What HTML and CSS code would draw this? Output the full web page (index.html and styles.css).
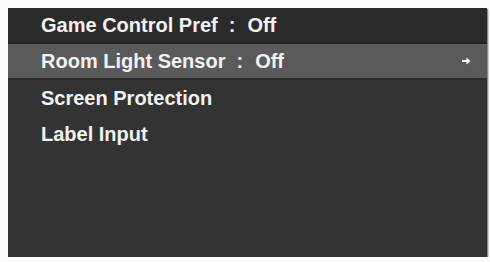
FILE: index.html
```html
<!DOCTYPE html>
<html>
<head>
<meta charset="utf-8">
<link rel="stylesheet" href="styles.css">
</head>
<body>
<div class="panel">
  <div class="row header"><span class="label">Game Control Pref</span><span class="colon">:</span><span class="value">Off</span></div>
  <div class="row selected"><span class="label">Room Light Sensor</span><span class="colon">:</span><span class="value">Off</span>
    <svg class="arrow" width="9" height="8" viewBox="0 0 9 8"><path d="M0 3h4.5V0.5L8.5 4 4.5 7.5V5H0z" fill="#fff"/></svg>
  </div>
  <div class="row"><span class="label">Screen Protection</span></div>
  <div class="row"><span class="label">Label Input</span></div>
</div>
</body>
</html>
```
FILE: styles.css
```css
html, body {
  margin: 0;
  padding: 0;
  background: #fbfbfb;
}
body {
  padding: 8px 0 0 8px;
}
.panel {
  width: 479px;
  height: 249px;
  background: #333333;
  box-shadow: 1px 1px 0 #8a8a8a, 2px 2px 0 #d0d0d0;
  font-family: "Liberation Sans", Arial, sans-serif;
  font-weight: bold;
  font-size: 20px;
  color: #f2f2f2;
  display: flex;
  flex-direction: column;
}
.row {
  height: 36px;
  line-height: 34px;
  padding-left: 33px;
  padding-right: 16px;
  display: flex;
  align-items: center;
  box-sizing: border-box;
  white-space: pre;
}
.header {
  background: #2b2b2b;
  border-bottom: 2px solid #232323;
  line-height: 32px;
}
.selected {
  background: #5a5a5a;
  border-bottom: 2px solid #2a2a2a;
}
.colon {
  margin: 0 12px 0 11px;
}
.arrow {
  margin-left: auto;
}
```
